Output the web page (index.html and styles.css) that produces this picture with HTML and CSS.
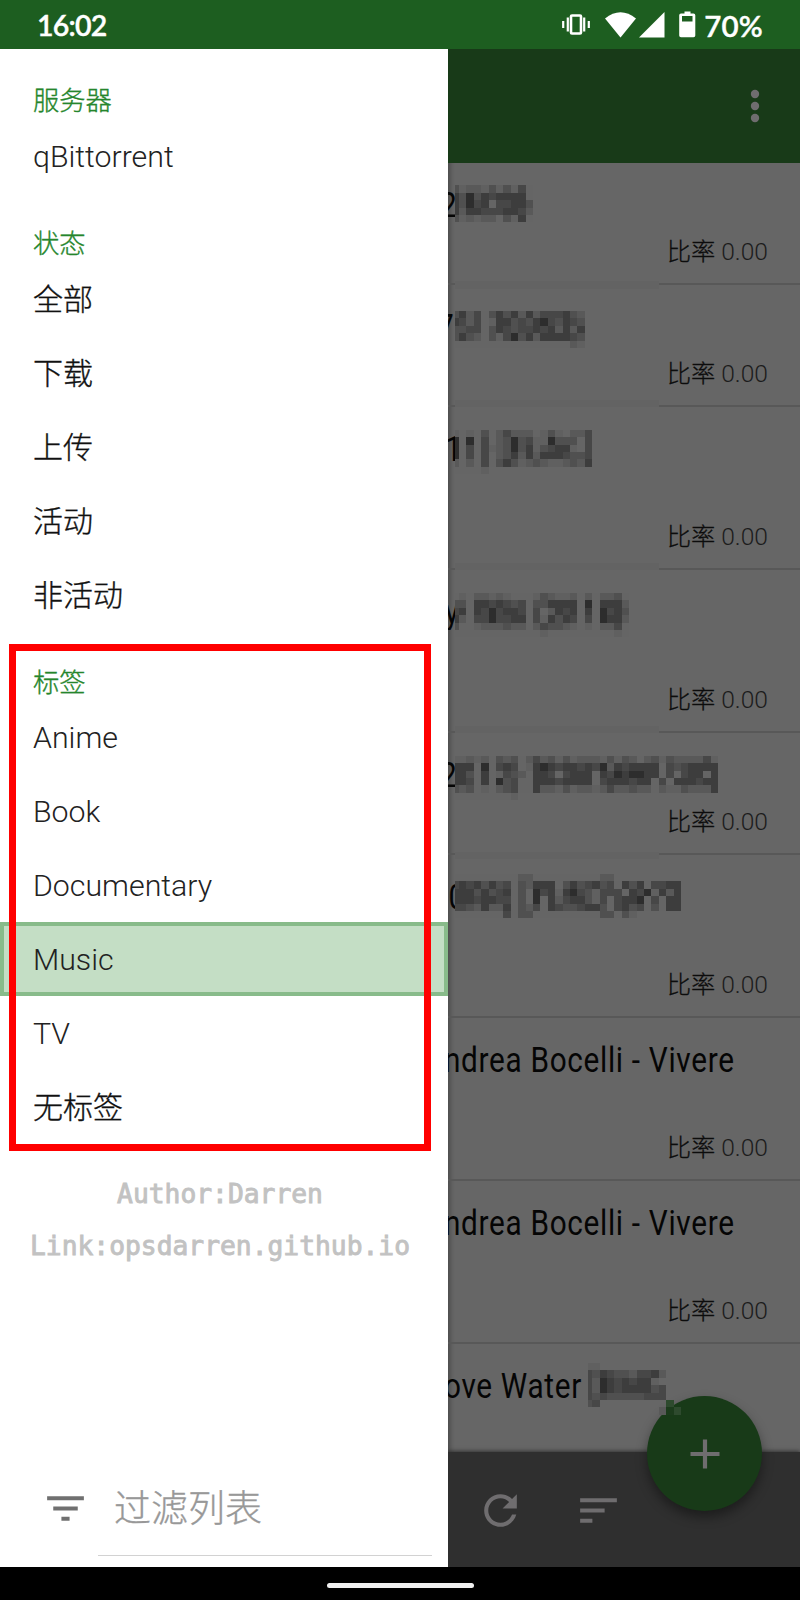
FILE: index.html
```html
<!DOCTYPE html>
<html lang="zh-CN">
<head>
<meta charset="utf-8">
<title>qBittorrent</title>
<link rel="stylesheet" href="styles.css">
</head>
<body>
<div class="screen">
  <header class="status">
    <span class="clock">16:02</span>
    <div class="status-icons">
      <svg class="i-vibrate" width="28" height="21" viewBox="0 0 28 21"><rect x="9" y="1.5" width="10" height="18" rx="1" fill="none" stroke="#fff" stroke-width="2.6"/><path d="M5.8 3.5v14M1.2 7v7M22.2 3.5v14M26.8 7v7" stroke="#fff" stroke-width="2.2"/></svg>
      <svg class="i-wifi" width="31" height="26" viewBox="0 0 31 26"><path d="M0 6.5Q15.500-6 31 6.500L15.500 25.500Z" fill="#fff"/></svg>
      <svg class="i-signal" width="26" height="26" viewBox="0 0 26 26"><path d="M25.500 0v25.500H0Z" fill="#fff"/></svg>
      <svg class="i-battery" width="17" height="27" viewBox="0 0 17 27"><path fill="#fff" fill-rule="evenodd" d="M5.500 0.500h6v2h3q1.800 0 1.800 1.800v20.200q0 1.800-1.800 1.800h-12.500q-1.800 0-1.800-1.800v-20.200q0-1.800 1.800-1.800h3.500ZM3 5v5.500h10.500v-5.500Z"/></svg>
      <span class="percent">70%</span>
    </div>
  </header>

  <div class="body">
    <aside class="drawer">
      <nav class="nav">
        <h2 class="group">服务器</h2>
        <div class="item latin">qBittorrent</div>
        <h2 class="group">状态</h2>
        <div class="item">全部</div>
        <div class="item">下载</div>
        <div class="item">上传</div>
        <div class="item">活动</div>
        <div class="item">非活动</div>
        <h2 class="group">标签</h2>
        <div class="item latin">Anime</div>
        <div class="item latin">Book</div>
        <div class="item latin">Documentary</div>
        <div class="item latin selected">Music</div>
        <div class="item latin">TV</div>
        <div class="item">无标签</div>
      </nav>
      <div class="credit">
        <div>Author:Darren</div>
        <div>Link:opsdarren.github.io</div>
      </div>
      <div class="filter">
        <svg width="49" height="49" viewBox="0 0 24 24"><path fill="#707070" d="M10 18h4v-2h-4v2zM3 6v2h18V6H3zm3 7h12v-2H6v2z"/></svg>
        <div class="filter-input">过滤列表</div>
      </div>
      <div class="highlight"></div>
    </aside>

    <main class="main">
      <div class="appbar">
        <svg width="10" height="36" viewBox="0 0 10 36"><g fill="#6f6d6f"><circle cx="5" cy="6" r="4.200"/><circle cx="5" cy="18" r="4.200"/><circle cx="5" cy="30" r="4.200"/></g></svg>
      </div>
      <div class="list">
        <div class="row"><div class="title stub"><span>2</span></div><div class="ratio">比率 <span>0.00</span></div></div>
        <div class="row"><div class="title stub seven"><span>7</span></div><div class="ratio">比率 <span>0.00</span></div></div>
        <div class="row tall"><div class="title stub one"><span>1</span></div><div class="ratio">比率 <span>0.00</span></div></div>
        <div class="row tall"><div class="title stub wide"><span>ty</span></div><div class="ratio">比率 <span>0.00</span></div></div>
        <div class="row"><div class="title stub"><span>2</span></div><div class="ratio">比率 <span>0.00</span></div></div>
        <div class="row tall"><div class="title stub zero"><span>20</span></div><div class="ratio">比率 <span>0.00</span></div></div>
        <div class="row tall"><div class="title andrea"><span>ndrea Bocelli - Vivere</span></div><div class="ratio">比率 <span>0.00</span></div></div>
        <div class="row tall"><div class="title andrea"><span>ndrea Bocelli - Vivere</span></div><div class="ratio">比率 <span>0.00</span></div></div>
        <div class="row last"><div class="title water"><span>ove Water</span></div></div>
      </div>
      <div class="bottombar">
        <svg width="49" height="49" viewBox="0 0 24 24"><path fill="#6f6d6f" d="M17.650 6.350C16.200 4.900 14.210 4 12 4c-4.420 0-7.990 3.580-7.990 8s3.570 8 7.990 8c3.730 0 6.840-2.550 7.730-6h-2.080c-.82 2.330-3.040 4-5.650 4-3.310 0-6-2.690-6-6s2.690-6 6-6c1.660 0 3.140.69 4.220 1.780L13 11h7V4l-2.350 2.350z"/></svg>
        <svg width="49" height="49" viewBox="0 0 24 24"><path fill="#6f6d6f" d="M3 18h6v-2H3v2zM3 6v2h18V6H3zm0 7h12v-2H3v2z"/></svg>
      </div>
      <div class="fab"><svg width="30" height="30" viewBox="0 0 30 30"><path d="M15 .5v29M.5 15h29" stroke="#6f6d6f" stroke-width="4.200"/></svg></div>
      <svg class="mosaic" width="352" height="1289" viewBox="448 163 352 1289" shape-rendering="crispEdges"></svg>
    </main>
  </div>

  <footer class="sysnav"><div class="pill"></div></footer>
</div>
<script src="mosaic.js"></script>
</body>
</html>
```
FILE: mosaic.js
```js
// Censored titles: each string is one line of pixelated cells, 1 = lightest, 6 = darkest.
const CELL = 7.4;
const LEFT = 451.6;
const SHADES = {1: '#606060', 2: '#595959', 3: '#505050', 4: '#474747', 5: '#3d3d3d', 6: '#2d2d2d', g: '#2e4a2e', h: '#1c3b1c'};
const BLOCKS = [
  {y: 185.3, col: 0, rows: ['3122131314.', '5363545555.', '53645.44553', '52554445542', '312122.315.']},
  {y: 311, col: 0, rows: ['3524.3535252444532', '5424.1553435643543', '3344.3543445452525', '3532.3146352555543', '................21']},
  {y: 429.7, col: 0, rows: ['1.1.3.24222.131.224', '6.6.4.23634116333.4', '6.4.4123635134551.4', '6.4.4.2352525554334', '2.2.4.3531232112325', '....1']},
  {y: 593, col: 0, rows: ['.1.22121...132112.2.223.', '33.5545434.335555.6.5552', '45.5464554.4.2545.5.6453', '52.4464455.415354.4.6552', '3..1222322.243321.1.224.', '............1.........1.']},
  {y: 755.7, col: 0, rows: ['11212.323.242313122213132.2313222241', '555.6.454.156545545462545555.4345555', '553.5.1432.554.4555.54656655.4.455.5', '554.5.634..55545555.4555455.4.555455', '323.1.234..5221312212422322.21132225', '........1']},
  {y: 874, col: 0, rows: ['.........22.........22', '45453534.32555.3534534.535.4455', '55535345.3.645156431444.5461525', '55545544.3.6.52455314.4556.4.55', '44325225.324.54334553.4534.3.55', '.......4.33.........33.31']},
  {y: 1363, col: 18, rows: ['11', '43543324452', '4265454551.', '42654555534', '43433333444', '34.........g', '..........2hg']}
];
// Flattened strips that break the row separators.
const STRIPS = [281.3, 400, 563, 726, 852];

const svg = document.querySelector('.mosaic');
function rect(x, y, w, h, fill) {
  const r = document.createElementNS('http://www.w3.org/2000/svg', 'rect');
  r.setAttribute('x', x);
  r.setAttribute('y', y);
  r.setAttribute('width', w);
  r.setAttribute('height', h);
  r.setAttribute('fill', fill);
  svg.appendChild(r);
}
STRIPS.forEach(y => rect(455, y, 203.5, 7.2, '#636363'));
BLOCKS.forEach(b => b.rows.forEach((line, i) => {
  [...line].forEach((ch, j) => {
    const minX = b.col ? 588 : 455;
    const x = LEFT + (b.col + j) * CELL;
    const x0 = Math.max(minX, x);
    if (b.col && ch === '.') return;
    rect(x0, b.y + i * CELL, x + CELL - x0, CELL, SHADES[ch] || '#656565');
  });
}));
```
FILE: styles.css
```css
* { box-sizing: border-box; }
body { margin: 0; background: #000; font-family: Roboto, "Noto Sans CJK SC", sans-serif; }
svg { display: block; flex: none; }

.screen { width: 800px; height: 1600px; display: flex; flex-direction: column; overflow: hidden; }

.status {
  height: 49px; flex: none; display: flex; align-items: center; justify-content: space-between;
  padding: 0 37px 0 37px; background: #1d5e20; color: #fff;
  font-family: Lato, sans-serif; font-size: 28.5px; font-weight: 600; line-height: 49px;
  -webkit-text-stroke: .4px #fff;
}
.clock { padding-top: 2px; letter-spacing: -.8px; }
.status-icons { display: flex; align-items: center; }
.i-wifi { margin-left: 15px; }
.i-signal { margin-left: 3px; }
.i-battery { margin-left: 14px; }
.percent { margin-left: 8px; padding-top: 1px; font-size: 29.5px; letter-spacing: .2px; }

.body { height: 1518px; flex: none; display: flex; }

.drawer { position: relative; width: 448px; flex: none; display: flex; flex-direction: column; background: #fff; }
.nav { padding-top: 1px; }
.group {
  margin: 0; height: 68.8px; padding: 33px 33px 0; line-height: 36px;
  font-size: 26.3px; font-weight: 300; color: #25862c; -webkit-text-stroke: .35px #25862c;
}
.item {
  height: 74px; padding: 0 33px; line-height: 75px;
  font-size: 30px; font-weight: 300; color: #111; -webkit-text-stroke: .35px #111;
}
.item.latin { font-size: 30.3px; line-height: 76px; color: #222; -webkit-text-stroke: 0; }
.item.selected { background: #c4dec5; border: 4px solid #88bb8a; padding: 0 29px; line-height: 68px; }

.credit {
  padding: 24px 8px 0 0; text-align: center; line-height: 52px; white-space: nowrap;
  font-family: "DejaVu Sans Mono", monospace; font-size: 26.3px; color: #c2c2c2;
  -webkit-text-stroke: 0.9px #c2c2c2;
}
.filter { margin-top: auto; display: flex; align-items: center; height: 118px; padding: 0 16px 0 41px; }
.filter-input {
  flex: 1; margin: 0 0 0 8px; padding-left: 16px; height: 95px; line-height: 98px;
  border-bottom: 1px solid #d2d2d2; font-size: 37px; font-weight: 300; color: #989898; -webkit-text-stroke: .35px #989898;
}
.highlight { position: absolute; left: 9px; top: 595px; width: 422px; height: 507px; border: 7.3px solid #f00; }

.main { position: relative; width: 352px; display: flex; flex-direction: column; background: #666; box-shadow: inset 5px 0 5px -3px rgba(0,0,0,.3); overflow: hidden; }
.appbar { height: 114px; flex: none; display: flex; align-items: center; justify-content: flex-end; padding-right: 40px; background: #183a18; }
.list { flex: 1; overflow: hidden; }
.row { height: 122px; border-bottom: 2px solid #585858; display: flex; flex-direction: column; justify-content: space-between; }
.row.tall { height: 163px; }
.row.last { border: 0; }
.title { height: 60px; padding-top: 21px; overflow: hidden; white-space: nowrap; font-size: 35px; line-height: 44px; color: #050505; }
.title span { display: inline-block; transform: scaleX(.85); transform-origin: 0 0; letter-spacing: .8px; }
.stub { width: 9px; display: flex; justify-content: flex-end; }
.stub span { transform-origin: 100% 0; flex: none; }
.stub.seven { width: 6px; }
.stub.one { width: 14px; }
.stub.wide { width: 12px; }
.stub.zero { width: 18px; }
.andrea span { margin-left: -4px; }
.water span { margin-left: -4px; }
.ratio { height: 60px; padding-right: 32px; text-align: right; line-height: 58px; font-size: 24.3px; font-weight: 300; color: #0c0c0c; -webkit-text-stroke: .3px #0c0c0c; }
.ratio span { font-size: 24.6px; color: #1c1c1c; -webkit-text-stroke: 0; }

.bottombar { position: relative; height: 115px; flex: none; display: flex; align-items: center; gap: 49px; padding: 1px 28px 0; background: #2f2f2f; box-shadow: 0 -1px 4px rgba(0,0,0,.5); }
.fab {
  position: absolute; left: 199px; top: 1347px; width: 115px; height: 115px; border-radius: 50%;
  display: flex; align-items: center; justify-content: center;
  background: #183a18; box-shadow: 0 6px 12px rgba(0,0,0,.4);
}
.mosaic { position: absolute; left: 0; top: 114px; }

.sysnav { height: 33px; flex: none; display: flex; align-items: center; justify-content: center; background: #000; padding-top: 3px; }
.pill { width: 147px; height: 5px; border-radius: 3px; background: #f0f0f0; }
```
